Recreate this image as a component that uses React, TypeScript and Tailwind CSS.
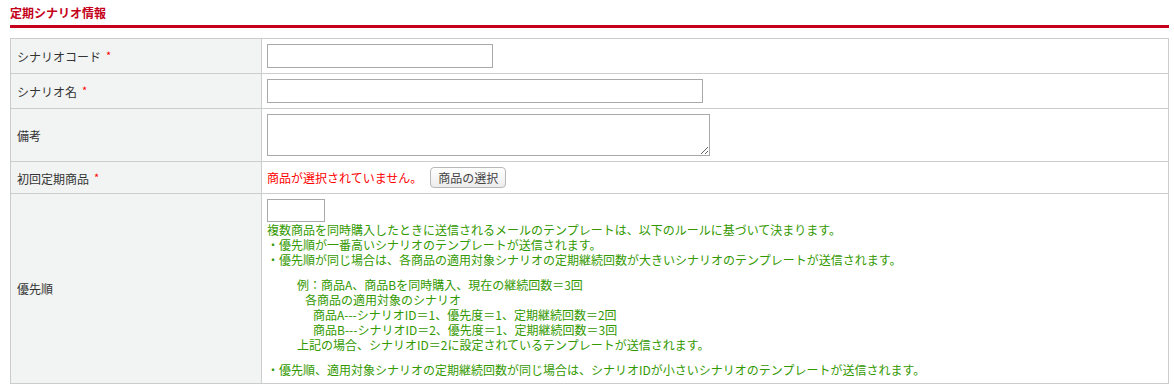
import React from "react";

const font = { fontFamily: '"Noto Sans CJK JP", "Noto Sans", sans-serif' };

function Req() {
  return <span className="ml-[5px] text-[11px] text-[#ff0000] align-[2px]">*</span>;
}

export default function App() {
  return (
    <div className="bg-white w-[1174px] h-[389px] pl-[10px] pt-[5px]" style={font}>
      <div className="w-[1159px]">
        <h2 className="text-[12px] font-bold text-[#c4001a] leading-[15px] pb-[5px] border-b-[3px] border-[#c4001a]">
          定期シナリオ情報
        </h2>
        <table className="mt-[10px] w-[1159px] border-collapse table-fixed text-[12px] leading-[15px] text-[#333]">
          <colgroup>
            <col className="w-[251px]" />
            <col />
          </colgroup>
          <tbody>
            <tr className="h-[35px]">
              <td className="border border-[#cccccc] bg-[#f2f3f3] px-[6px] align-middle">
                シナリオコード<Req />
              </td>
              <td className="border border-[#cccccc] px-[5px] py-[5px] align-middle">
                <input className="block w-[226px] h-[24px] border border-[#a9a9a9] bg-white" />
              </td>
            </tr>
            <tr className="h-[35px]">
              <td className="border border-[#cccccc] bg-[#f2f3f3] px-[6px] align-middle">
                シナリオ名<Req />
              </td>
              <td className="border border-[#cccccc] px-[5px] py-[5px] align-middle">
                <input className="block w-[436px] h-[24px] border border-[#a9a9a9] bg-white" />
              </td>
            </tr>
            <tr className="h-[53px]">
              <td className="border border-[#cccccc] bg-[#f2f3f3] px-[6px] align-middle">備考</td>
              <td className="border border-[#cccccc] px-[5px] py-[5px] align-middle">
                <textarea className="block w-[443px] h-[42px] border border-[#a9a9a9] bg-white resize" />
              </td>
            </tr>
            <tr className="h-[32px]">
              <td className="border border-[#cccccc] bg-[#f2f3f3] px-[6px] align-middle">
                初回定期商品<Req />
              </td>
              <td className="border border-[#cccccc] px-[5px] py-[5px] align-middle">
                <div className="flex items-center">
                  <span className="text-[#ff0000]">商品が選択されていません。</span>
                  <button className="ml-[8px] w-[76px] h-[21px] rounded-[4px] border border-[#b8b8b8] bg-gradient-to-b from-[#ffffff] to-[#ececec] text-[12px] leading-[15px] text-[#444]">
                    商品の選択
                  </button>
                </div>
              </td>
            </tr>
            <tr className="h-[190px]">
              <td className="border border-[#cccccc] bg-[#f2f3f3] px-[6px] align-middle">優先順</td>
              <td className="border border-[#cccccc] px-[5px] py-[5px] align-top">
                <input className="block w-[58px] h-[23px] border border-[#a9a9a9] bg-white" />
                <div className="text-[#339900]">
                  <div>複数商品を同時購入したときに送信されるメールのテンプレートは、以下のルールに基づいて決まります。</div>
                  <div>・優先順が一番高いシナリオのテンプレートが送信されます。</div>
                  <div>・優先順が同じ場合は、各商品の適用対象シナリオの定期継続回数が大きいシナリオのテンプレートが送信されます。</div>
                  <div className="mt-[10px] mb-[10px]">
                    <div className="pl-[30px]">例：商品A、商品Bを同時購入、現在の継続回数＝3回</div>
                    <div className="pl-[38px]">各商品の適用対象のシナリオ</div>
                    <div className="pl-[46px]">商品A---シナリオID＝1、優先度＝1、定期継続回数＝2回</div>
                    <div className="pl-[46px]">商品B---シナリオID＝2、優先度＝1、定期継続回数＝3回</div>
                    <div className="pl-[30px]">上記の場合、シナリオID＝2に設定されているテンプレートが送信されます。</div>
                  </div>
                  <div>・優先順、適用対象シナリオの定期継続回数が同じ場合は、シナリオIDが小さいシナリオのテンプレートが送信されます。</div>
                </div>
              </td>
            </tr>
          </tbody>
        </table>
      </div>
    </div>
  );
}
